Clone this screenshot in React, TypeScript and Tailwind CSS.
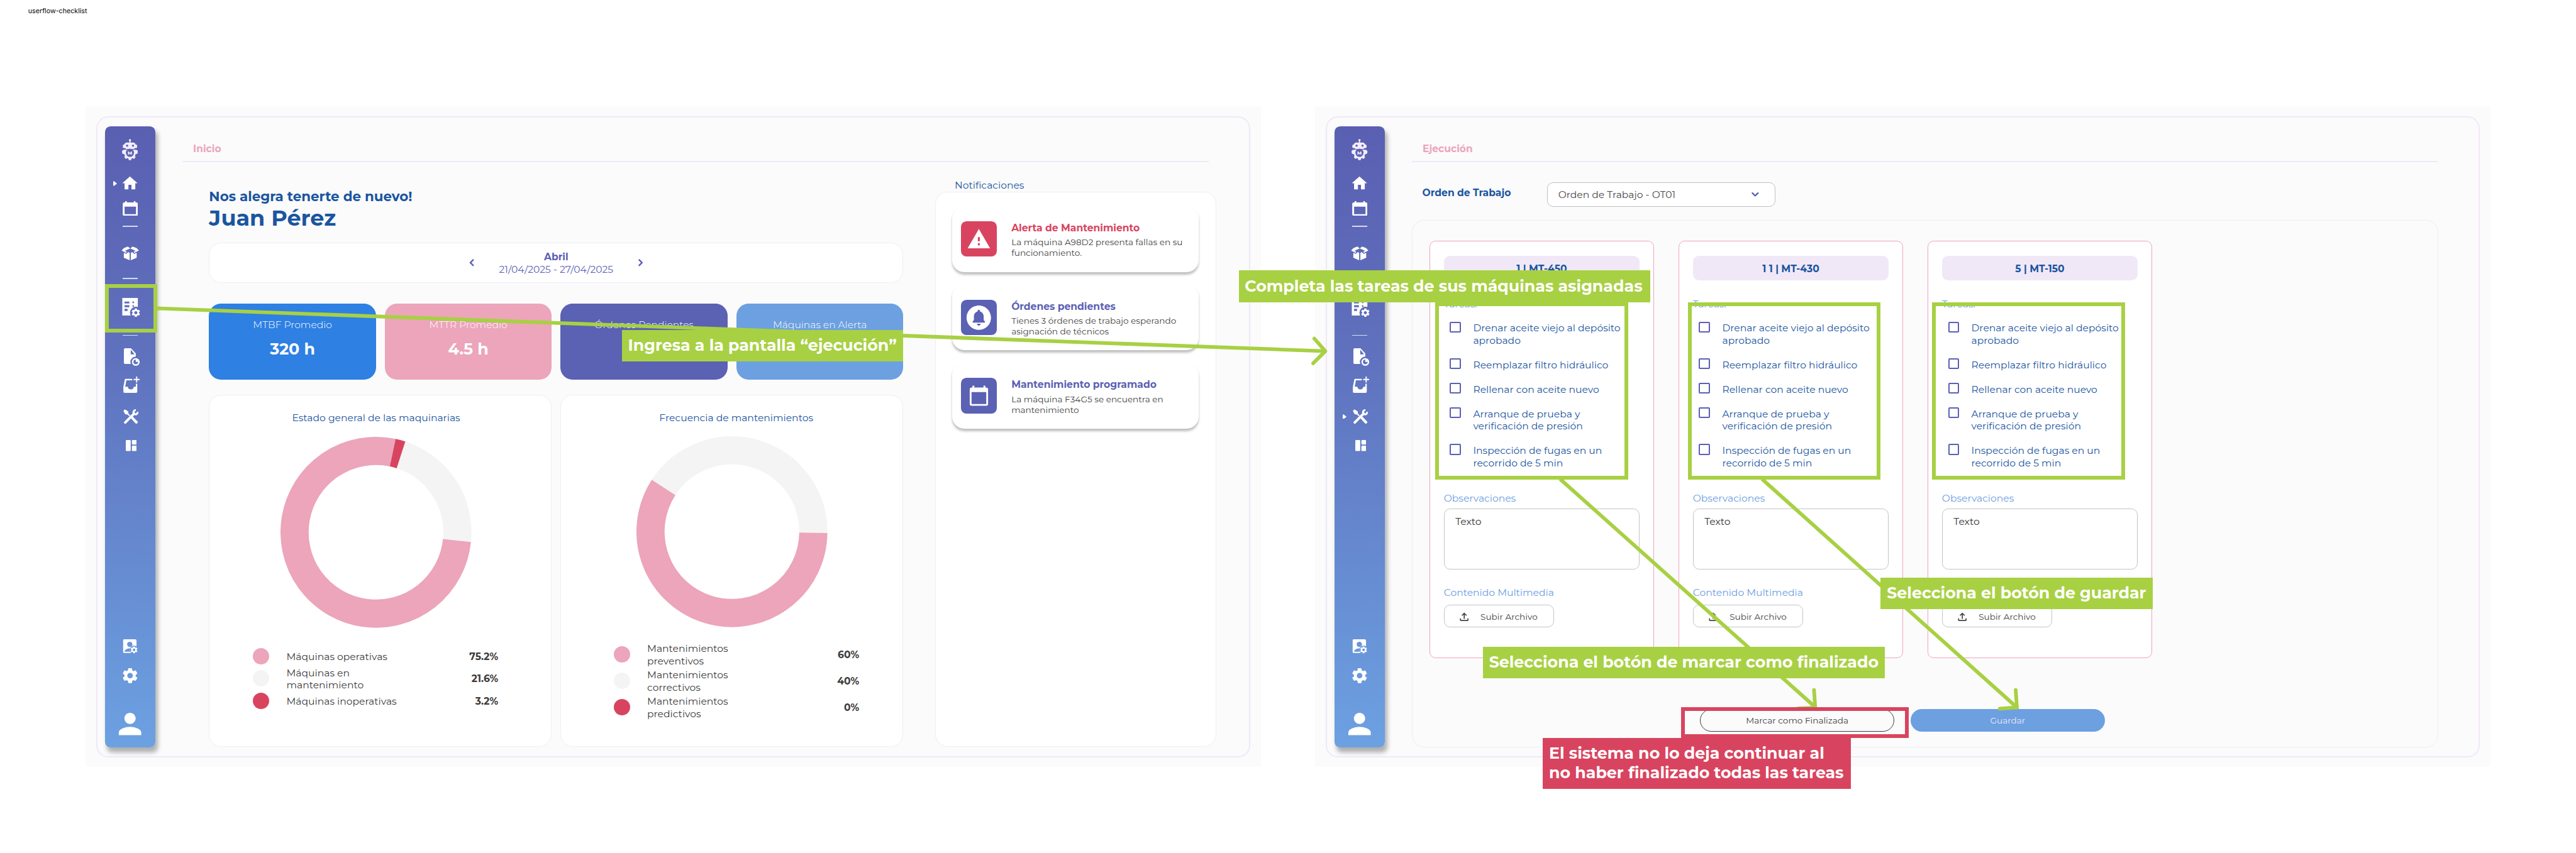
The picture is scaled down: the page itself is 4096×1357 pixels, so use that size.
import type { ReactNode } from "react";
import {
  MdCalendarToday,
  MdCircleNotifications,
  MdHome,
  MdOutlineFileUpload,
  MdPerson,
  MdSettings,
  MdWarning,
} from "react-icons/md";

/* ---------- Sidebar icons ---------- */

function RobotIcon() {
  return (
    <svg viewBox="0 0 78 103" className="h-[35px] w-[26px]" fill="#F4EDFB">
      <circle cx="39" cy="5.5" r="5.5" />
      <rect x="36.5" y="5" width="5" height="14" />
      <rect x="10" y="17" width="58" height="31" rx="14" />
      <rect x="4" y="27" width="70" height="17" rx="5" />
      <circle cx="25" cy="32" r="5.5" fill="#5C63B4" />
      <circle cx="54" cy="32" r="5.5" fill="#5C63B4" />
      <circle cx="39" cy="69" r="28" />
      <circle cx="11" cy="63" r="11" />
      <circle cx="67" cy="63" r="11" />
      <rect x="32" y="88" width="14" height="15" rx="4" />
      <rect x="32" y="88" width="14" height="15" rx="4" transform="rotate(45 39 69)" />
      <rect x="32" y="88" width="14" height="15" rx="4" transform="rotate(-45 39 69)" />
      <path d="M20 48h38v6c-12-6-26-6-38 0z" fill="#5C63B4" />
      <circle cx="39" cy="67" r="20" fill="#5C63B4" />
      <text x="39" y="75" textAnchor="middle" fontSize="23" fontWeight="800" fill="#F4EDFB">
        M
      </text>
    </svg>
  );
}

function CalendarIcon() {
  return (
    <svg viewBox="0 0 74 72" className="h-6 w-[25px]" fill="white" fillRule="evenodd">
      <path d="M12 0h8v6h34V0h8v6h4a8 8 0 0 1 8 8v50a8 8 0 0 1-8 8H8a8 8 0 0 1-8-8V14a8 8 0 0 1 8-8h4zM9 27v37h56V27z" />
    </svg>
  );
}

function OpenBoxIcon() {
  return (
    <svg viewBox="66 546 86 70" className="h-[23px] w-[29px]" fill="white">
      <path d="M66 566l12-12 19-7 12 9-18 8-9 5 11 4-5 5z" />
      <path d="M152 566l-12-12-19-7-12 9 18 8 9 5-11 4 5 5z" />
      <path d="M77 578l13 5 9-9 7 4v37l-29-13z" />
      <path d="M141 578l-13 5-9-9-7 4v37l29-13z" />
    </svg>
  );
}

function ListGearIcon() {
  return (
    <svg viewBox="69 801 90 97" className="h-8 w-[30px]" fill="white">
      <mask id="list-gear" maskUnits="userSpaceOnUse" x="69" y="801" width="90" height="97">
        <rect x="69" y="801" width="90" height="97" fill="white" />
        <path d="M81 819h24v9H81zM81 837h24v10H81zM81 855h15v11H81z" fill="black" />
        <circle cx="124" cy="823" r="4.5" fill="black" />
        <circle cx="124" cy="841" r="4.5" fill="black" />
        <circle cx="138" cy="874" r="30" fill="black" />
      </mask>
      <rect x="69" y="801" width="78" height="87" mask="url(#list-gear)" />
      <MdSettings x="111" y="848" size={52} color="white" />
    </svg>
  );
}

function FileClockIcon() {
  return (
    <svg viewBox="78 1047 79 88" className="h-[29px] w-[26px]" fill="white">
      <mask id="file-clock" maskUnits="userSpaceOnUse" x="78" y="1047" width="79" height="88">
        <rect x="78" y="1047" width="79" height="88" fill="white" />
        <path d="M112 1054v23h19z" fill="black" />
        <circle cx="137" cy="1115" r="27" fill="black" />
      </mask>
      <path
        d="M84 1047h29l24 26v52H84a6 6 0 0 1-6-6v-66a6 6 0 0 1 6-6z"
        mask="url(#file-clock)"
      />
      <circle cx="137" cy="1115" r="15.5" fill="none" stroke="white" strokeWidth="7.5" />
      <path d="M137 1103a12 12 0 0 1 12 12h-12z" />
    </svg>
  );
}

function InboxPlusIcon() {
  return (
    <svg viewBox="75 1188 81 82" className="h-[27px] w-[27px]" fill="white" fillRule="evenodd">
      <path d="M83 1200h36v7H90l-6 32h13c1 9 7 13 15 13s14-4 15-13h10v-15h7v39a6 6 0 0 1-6 6H81a6 6 0 0 1-6-6v-24z" />
      <path d="M138 1188h6v12h12v6h-12v12h-6v-12h-12v-6h12z" />
    </svg>
  );
}

function ToolsIcon() {
  return (
    <svg viewBox="75 1346 73 71" className="h-6 w-[25px]" fill="none" stroke="white">
      <path d="M75 1354l7-7 16 9 2 12 8 8-4 4-9-8-11-2z" fill="white" stroke="none" />
      <path d="M119 1389l19 20" strokeWidth="13" strokeLinecap="round" />
      <path d="M84 1410l43-43" strokeWidth="12" strokeLinecap="round" />
      <path d="M143.5 1358.5A10 10 0 1 1 135.5 1351" strokeWidth="9" />
    </svg>
  );
}

function DashboardIcon() {
  return (
    <svg viewBox="0 0 54 54" className="h-[18px] w-[18px]" fill="white">
      <rect width="24" height="54" rx="4" />
      <rect x="30" width="24" height="22" rx="4" />
      <rect x="30" y="28" width="24" height="26" rx="4" />
    </svg>
  );
}

function UserGearIcon() {
  return (
    <svg viewBox="73 46 73 72" className="h-6 w-[25px]" fill="white">
      <mask id="user-gear" maskUnits="userSpaceOnUse" x="73" y="46" width="73" height="72">
        <rect x="73" y="46" width="73" height="72" fill="white" />
        <circle cx="107" cy="71" r="13" fill="black" />
        <path d="M80 107c6-12 16-16 28-16v16z" fill="black" />
        <circle cx="128" cy="98" r="21" fill="black" />
      </mask>
      <rect x="73" y="46" width="67" height="67" rx="7" mask="url(#user-gear)" />
      <MdSettings x="107" y="77" size={42} color="white" />
    </svg>
  );
}

function ActiveMark() {
  return (
    <svg viewBox="0 0 6 8" className="absolute left-[13px] top-1/2 h-2 w-1.5 -translate-y-1/2" fill="white">
      <path d="M0 1.2C0 .2.8-.2 1.6.4l3.8 2.8c.7.5.7 1.1 0 1.6L1.6 7.6C.8 8.2 0 7.8 0 6.8z" />
    </svg>
  );
}

function Item({ className, active, children }: { className: string; active?: boolean; children: ReactNode }) {
  return (
    <div className={"relative flex w-full shrink-0 justify-center " + className}>
      {active && <ActiveMark />}
      {children}
    </div>
  );
}

function Sidebar({ active }: { active: "home" | "tools" }) {
  return (
    <nav className="flex h-[1014.5px] w-[82px] shrink-0 flex-col items-center rounded-[9px] bg-[linear-gradient(178deg,#5A5FB1,#5F70BD_35%,#6CA1E2)] pr-px shadow-[4px_8px_8px_rgba(0,0,0,0.3)]">
      <Item className="mt-5"><RobotIcon /></Item>
      <Item className="mt-[23px]" active={active === "home"}><MdHome size={30} color="white" /></Item>
      <Item className="mt-[14px]"><CalendarIcon /></Item>
      <div className="mt-[16px] h-[1.5px] w-[25px] bg-white/75" />
      <Item className="mt-[32px]"><OpenBoxIcon /></Item>
      <div className="mt-[29px] h-[1.5px] w-[25px] bg-white/75" />
      <Item className="mt-[31px] pl-[3px]"><ListGearIcon /></Item>
      <div className="mt-[28.5px] h-[1.5px] w-[25px] bg-white/75" />
      <Item className="mt-5 pl-[5px]"><FileClockIcon /></Item>
      <Item className="mt-[18px] pl-[4px]"><InboxPlusIcon /></Item>
      <Item className="mt-[26px] pl-[2px]" active={active === "tools"}><ToolsIcon /></Item>
      <Item className="mt-[26.5px] pl-[3px]"><DashboardIcon /></Item>
      <Item className="mt-auto"><UserGearIcon /></Item>
      <Item className="mt-[20px]"><MdSettings size={30.5} color="white" /></Item>
      <Item className="mb-[11px] mt-[36px]"><MdPerson size={55} color="white" /></Item>
    </nav>
  );
}

/* ---------- Shared screen shell ---------- */

function Screen({ title, active, children }: { title: string; active: "home" | "tools"; children: ReactNode }) {
  return (
    <section className="h-[1080px] w-[1920px] shrink-0 bg-[#FBFBFB] pl-[17.5px] pt-[16.5px]">
      <div className="flex h-[1048px] w-[1885px] rounded-[20px] border-[2.1px] border-[#F1E8F7] pl-[12.5px] pt-[14.5px]">
        <Sidebar active={active} />
        <main className="-mt-[14.5px] ml-[44px] w-[1677px]">
          <h1 className="mb-[10.5px] pl-[17.5px] pt-[40.5px] font-bold leading-5 text-[#ECA5BB]">{title}</h1>
          <div className="h-[2.1px] bg-[#F1E8F7]" />
          {children}
        </main>
      </div>
    </section>
  );
}

function Chevron({ className, d, box }: { className: string; d: string; box: string }) {
  return (
    <svg viewBox={box} className={className} fill="none" stroke="#5A5FB5">
      <path d={d} strokeWidth="2.4" strokeLinecap="round" strokeLinejoin="round" />
    </svg>
  );
}

/* ---------- Home screen ---------- */

const kpis = [
  { label: "MTBF Promedio", value: "320 h", color: "bg-[#2E80E3]" },
  { label: "MTTR Promedio", value: "4.5 h", color: "bg-[#ECA5BB]" },
  { label: "Órdenes Pendientes", value: "", color: "bg-[#5B61B3]" },
  { label: "Máquinas en Alerta", value: "", color: "bg-[#6CA0E1]" },
];

type Segment = { from: number; to: number; color: string };

function Donut({ segments, className }: { segments: Segment[]; className: string }) {
  const r = 133;
  const c = 156;
  const at = (deg: number) => {
    const a = ((deg - 90) * Math.PI) / 180;
    return `${c + r * Math.cos(a)} ${c + r * Math.sin(a)}`;
  };
  return (
    <svg viewBox="0 0 312 312" className={className} fill="none" strokeWidth="46">
      {segments.map((s) => (
        <path
          key={s.color}
          d={`M${at(s.from)}A${r} ${r} 0 ${s.to - s.from > 180 ? 1 : 0} 1 ${at(s.to)}`}
          stroke={s.color}
        />
      ))}
    </svg>
  );
}

function LegendRow({ dot, height, value, children }: { dot: string; height: string; value: string; children: ReactNode }) {
  return (
    <div className={"flex items-center " + height}>
      <div className={"size-[27px] rounded-full " + dot} />
      <span className="ml-[28px] flex-1 pt-[2px] leading-5">{children}</span>
      <b className="pt-[2px] font-bold leading-5">{value}</b>
    </div>
  );
}

function NotificationCard({ tile, tone, icon, title, lines }: { tile: string; tone: string; icon: ReactNode; title: string; lines: [string, string] }) {
  return (
    <article className="flex h-[107px] rounded-[20px] bg-white pl-[15px] pt-[24px] shadow-[0_4px_4px_rgba(0,0,0,0.25)]">
      <div className={"flex size-[58px] shrink-0 items-center justify-center rounded-[9px] " + tile}>{icon}</div>
      <div className="ml-[24px] pt-[1px]">
        <h3 className={"font-bold leading-5 " + tone}>{title}</h3>
        <p className="mt-[5.3px] text-[14px] leading-[17.3px] text-[#434343]">
          {lines[0]}
          <br />
          {lines[1]}
        </p>
      </div>
    </article>
  );
}

function HomeScreen() {
  return (
    <Screen title="Inicio" active="home">
      <div className="flex gap-[52px] pl-[43.5px]">
        <div className="w-[1134.5px] shrink-0">
          <p className="mt-[43px] text-[22px] font-bold leading-[26px] text-[#1A55A0]">Nos alegra tenerte de nuevo!</p>
          <p className="mt-[0.5px] text-[36px] font-bold leading-[44px] text-[#1A55A0]">Juan Pérez</p>

          <div className="mt-[17.5px] flex h-[66px] items-center justify-center rounded-[20px] border-[1.1px] border-[#F0EBFA] bg-white text-[#5A5FB5]">
            <Chevron className="h-[14px] w-[9px]" box="0 0 9 14" d="M6.5 2.5L2 7l4.5 4.5" />
            <div className="mx-[40px] pt-px text-center leading-5">
              <div className="font-bold">Abril</div>
              <div>21/04/2025 - 27/04/2025</div>
            </div>
            <Chevron className="h-[14px] w-[9px]" box="0 0 9 14" d="M2.5 2.5L7 7l-4.5 4.5" />
          </div>

          <div className="mt-[33.5px] grid grid-cols-4 gap-[14.3px]">
            {kpis.map((k) => (
              <div key={k.label} className={"h-[125px] rounded-[20px] pt-[24.5px] text-center text-white " + k.color}>
                <div className="font-light leading-5">{k.label}</div>
                <div className="mt-[14px] text-[26px] font-bold leading-8">{k.value}</div>
              </div>
            ))}
          </div>

          <div className="mt-[24px] grid grid-cols-2 gap-[14.3px] text-[#3C3C3C]">
            <div className="h-[576px] rounded-[20px] border-[1.1px] border-[#F0EBFA] bg-white pt-[27px]">
              <div className="pr-[14px] text-center leading-5 text-[#1A55A0]">Estado general de las maquinarias</div>
              <Donut
                className="ml-[116px] mt-[21.5px] size-[312px]"
                segments={[
                  { from: 17.7, to: 95.8, color: "#F4F4F4" },
                  { from: 95.8, to: 372, color: "#ECA5BB" },
                  { from: 11.9, to: 17.9, color: "#D8445F" },
                ]}
              />
              <div className="ml-[70.5px] mt-[32.5px] flex w-[401px] flex-col gap-[3px]">
                <LegendRow dot="bg-[#ECA5BB]" height="h-[27px]" value="75.2%">Máquinas operativas</LegendRow>
                <LegendRow dot="bg-[#F4F4F4]" height="h-[40px]" value="21.6%">
                  Máquinas en
                  <br />
                  mantenimiento
                </LegendRow>
                <LegendRow dot="bg-[#D8445F]" height="h-[27px]" value="3.2%">Máquinas inoperativas</LegendRow>
              </div>
            </div>

            <div className="h-[576px] rounded-[20px] border-[1.1px] border-[#F0EBFA] bg-white pt-[27px]">
              <div className="pl-[14px] text-center leading-5 text-[#1A55A0]">Frecuencia de mantenimientos</div>
              <Donut
                className="mx-auto mt-[20.5px] size-[312px]"
                segments={[
                  { from: -57.3, to: 90.8, color: "#F4F4F4" },
                  { from: 90.8, to: 302.9, color: "#ECA5BB" },
                ]}
              />
              <div className="ml-[85.5px] mt-[24px] flex w-[401.5px] flex-col gap-[3.2px]">
                <LegendRow dot="bg-[#ECA5BB]" height="h-[40px]" value="60%">
                  Mantenimientos
                  <br />
                  preventivos
                </LegendRow>
                <LegendRow dot="bg-[#F4F4F4]" height="h-[40px]" value="40%">
                  Mantenimientos
                  <br />
                  correctivos
                </LegendRow>
                <LegendRow dot="bg-[#D8445F]" height="h-[40px]" value="0%">
                  Mantenimientos
                  <br />
                  predictivos
                </LegendRow>
              </div>
            </div>
          </div>
        </div>

        <aside className="w-[459px] shrink-0">
          <h2 className="mt-[27.5px] pl-[32px] leading-5 text-[#1A55A0]">Notificaciones</h2>
          <div className="mt-[0.5px] flex h-[907.5px] flex-col gap-[21.2px] rounded-[20px] border-[1.1px] border-[#F0EBFA] bg-white pl-[26.5px] pr-[27px] pt-[23px]">
            <NotificationCard
              tile="bg-[#D8445F]"
              tone="text-[#D8445F]"
              icon={<MdWarning size={40} color="white" />}
              title="Alerta de Mantenimiento"
              lines={["La máquina A98D2 presenta fallas en su", "funcionamiento."]}
            />
            <NotificationCard
              tile="bg-[#5B61B3]"
              tone="text-[#5B61B3]"
              icon={<MdCircleNotifications size={48} color="white" />}
              title="Órdenes pendientes"
              lines={["Tienes 3 órdenes de trabajo esperando", "asignación de técnicos"]}
            />
            <NotificationCard
              tile="bg-[#5B61B3]"
              tone="text-[#5B61B3]"
              icon={<MdCalendarToday size={36} color="white" />}
              title="Mantenimiento programado"
              lines={["La máquina F34G5 se encuentra en", "mantenimiento"]}
            />
          </div>
        </aside>
      </div>
    </Screen>
  );
}

/* ---------- Execution screen ---------- */

const machines = ["1 | MT-450", "1 1 | MT-430", "5 | MT-150"];

const tasks = [
  ["Drenar aceite viejo al depósito", "aprobado"],
  ["Reemplazar filtro hidráulico"],
  ["Rellenar con aceite nuevo"],
  ["Arranque de prueba y", "verificación de presión"],
  ["Inspección de fugas en un", "recorrido de 5 min"],
];

function MachineCard({ name }: { name: string }) {
  return (
    <article className="h-[682.5px] w-[367px] shrink-0 rounded-[10px] border-[1.1px] border-[#ECA5BB] bg-white px-[22.5px] pt-[24.5px]">
      <h3 className="flex h-10 items-center justify-center rounded-[10px] bg-[#F1E8F7] pt-px font-bold leading-5 text-[#1A55A0]">{name}</h3>
      <div className="mt-[28px] leading-5 text-[#6CA0E1]">Tareas:</div>
      <ul className="mt-[19px] flex flex-col gap-[19px] pl-[10px] leading-5 text-[#1A55A0]">
        {tasks.map((lines) => (
          <li key={lines[0]} className="flex">
            <span className="mr-[20px] size-[18px] shrink-0 rounded-[2px] border-[2.1px] border-[#5A5FB5]" />
            <span className="pt-px">
              {lines.map((l) => (
                <span key={l} className="block">{l}</span>
              ))}
            </span>
          </li>
        ))}
      </ul>
      <div className="mt-[37.5px] leading-5 text-[#6CA0E1]">Observaciones</div>
      <div className="mt-[7px] h-[100px] rounded-[10px] border-[1.1px] border-[#C4C4C4] pl-[18px] pt-[10.5px] leading-5 text-[#333]">Texto</div>
      <div className="mt-[28px] leading-5 text-[#6CA0E1]">Contenido Multimedia</div>
      <div className="mt-[9.5px] flex h-[37px] w-[180px] items-center rounded-[10px] border-[1.1px] border-[#C4C4C4] pl-[22px] pt-[1.5px] text-[14px] text-[#434343]">
        <MdOutlineFileUpload size={21} />
        <span className="ml-[16px]">Subir Archivo</span>
      </div>
    </article>
  );
}

function ExecutionScreen() {
  return (
    <Screen title="Ejecución" active="tools">
      <div className="mt-[32px] flex h-10">
        <div className="w-[221px] pl-[17px] pt-[8px] font-bold leading-5 text-[#1A55A0]">Orden de Trabajo</div>
        <div className="flex w-[373px] items-center justify-between rounded-[10px] border-[1.1px] border-[#BFBFBF] bg-white pl-[17px] pr-[25px] pt-px text-[#4A4A4A]">
          Orden de Trabajo - OT01
          <Chevron className="h-[9px] w-[14px]" box="0 0 14 9" d="M2.5 2.2L7 6.7l4.5-4.5" />
        </div>
      </div>
      <div className="mt-[22px] h-[862px] rounded-[20px] border-[1.1px] border-[#F0EBFA] pl-[27.5px] pt-[32.5px]">
        <div className="flex gap-[40px]">
          {machines.map((m) => (
            <MachineCard key={m} name={m} />
          ))}
        </div>
        <div className="ml-[442.5px] mt-[84px] flex gap-[27px] text-[14px]">
          <div className="flex h-9 w-[317px] items-center justify-center rounded-full border-[1.1px] border-[#3C3C3C] pt-px text-[#3C3C3C]">Marcar como Finalizada</div>
          <div className="flex h-9 w-[317px] items-center justify-center rounded-full bg-[#6CA0E1] pt-px text-[#F1E8F7]">Guardar</div>
        </div>
      </div>
    </Screen>
  );
}

/* ---------- Flow annotations laid over the screens ---------- */

function Note({ className, children }: { className: string; children: ReactNode }) {
  return (
    <div className={"absolute p-[10px] text-[26px] font-bold leading-8 text-white " + className}>{children}</div>
  );
}

function Annotations() {
  return (
    <>
      <svg
        viewBox="0 0 4209 1394"
        className="absolute left-0 top-0 h-[1394px] w-[4209px]"
        fill="none"
        stroke="#A8D043"
        strokeWidth="6"
      >
        <path d="M255 504L2165 574" />
        <path d="M2147.5 553.5L2165.5 574L2145.5 594" strokeLinecap="round" strokeLinejoin="round" />
        <path d="M2549 783L2966 1156" />
        <path d="M2964 1128L2966 1157L2938 1158" strokeLinecap="round" />
        <path d="M2879 783L3295 1156" />
        <path d="M3293.5 1128L3295.5 1156.5L3267.5 1158.5" strokeLinecap="round" />
      </svg>
      <div className="absolute left-[172px] top-[464px] h-[80px] w-[85px] border-[6.2px] border-[#A8D043]" />
      <div className="absolute left-[2345px] top-[494px] h-[290px] w-[315px] border-[6.2px] border-[#A8D043]" />
      <div className="absolute left-[2758px] top-[494px] h-[290px] w-[315px] border-[6.2px] border-[#A8D043]" />
      <div className="absolute left-[3157px] top-[494px] h-[290px] w-[315px] border-[6.2px] border-[#A8D043]" />
      <div className="absolute left-[2747px] top-[1156px] h-[50px] w-[372px] border-[6.2px] border-[#D8445F]" />
      <Note className="left-[1016px] top-[539px] w-[460px] bg-[#A8D043]">Ingresa a la pantalla “ejecución”</Note>
      <Note className="left-[2024px] top-[442px] w-[672px] bg-[#A8D043]">Completa las tareas de sus máquinas asignadas</Note>
      <Note className="left-[2423px] top-[1057px] w-[657px] bg-[#A8D043]">Selecciona el botón de marcar como finalizado</Note>
      <Note className="left-[3073px] top-[944px] w-[444px] bg-[#A8D043]">Selecciona el botón de guardar</Note>
      <Note className="left-[2521px] top-[1206px] w-[503px] bg-[#D8445F]">
        El sistema no lo deja continuar al
        <br />
        no haber finalizado todas las tareas
      </Note>
    </>
  );
}

export default function App() {
  return (
    <div className="relative h-[1394px] w-[4209px] overflow-hidden whitespace-nowrap bg-white font-['Montserrat','Inter',sans-serif] text-[16px] [zoom:0.97315]">
      <div className="h-[174px] pl-[46px] pt-[11px] font-['Inter',sans-serif] text-[11px] leading-[14px] text-black">userflow-checklist</div>
      <div className="flex gap-[89px] pl-[140px]">
        <HomeScreen />
        <ExecutionScreen />
      </div>
      <Annotations />
    </div>
  );
}
